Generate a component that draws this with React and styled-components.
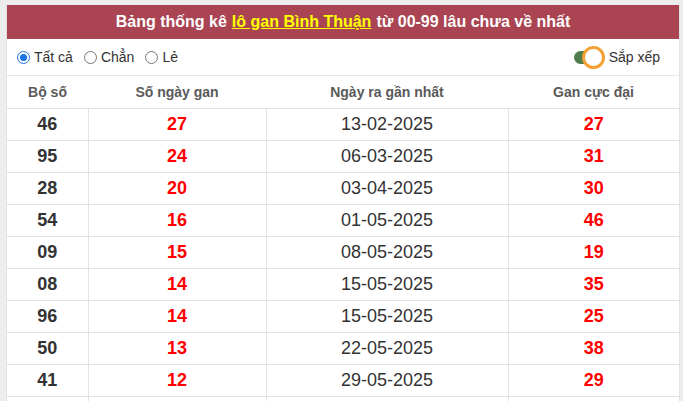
import React, { useState } from "react";
import styled, { createGlobalStyle } from "styled-components";

const GlobalStyle = createGlobalStyle`
  html, body {
    margin: 0;
    padding: 0;
    background: #ededed;
    overflow: hidden;
    font-family: "Liberation Sans", Arial, sans-serif;
  }
`;

const Page = styled.div`
  padding: 5px 3px 0 6px;
`;

const Card = styled.div`
  background: #fff;
  border-left: 1px solid #e2e2e2;
  border-right: 1px solid #e2e2e2;
`;

const Title = styled.div`
  height: 34px;
  background: #aa4453;
  color: #fff;
  font-weight: bold;
  font-size: 16px;
  display: flex;
  align-items: center;
  justify-content: center;
`;

const Highlight = styled.span`
  color: #ffff00;
  text-decoration: underline;
  margin: 0 5px;
`;

const FilterBar = styled.div`
  height: 36px;
  display: flex;
  align-items: center;
  justify-content: space-between;
  padding: 0 19px 0 9px;
  border-bottom: 1px solid #e6e6e6;
  font-size: 14px;
  color: #333;
`;

const Radios = styled.div`
  display: flex;
  align-items: center;
  gap: 10px;
`;

const RadioLabel = styled.label`
  display: flex;
  align-items: center;
  gap: 3px;
`;

const Radio = styled.span`
  width: 11px;
  height: 11px;
  border-radius: 50%;
  border: 1px solid ${(p) => (p.$on ? "#1a73e8" : "#767676")};
  display: flex;
  align-items: center;
  justify-content: center;
  margin: 0 1px;
  &::after {
    content: "";
    width: 7px;
    height: 7px;
    border-radius: 50%;
    background: ${(p) => (p.$on ? "#1a73e8" : "transparent")};
  }
`;

const Sort = styled.div`
  display: flex;
  align-items: center;
  gap: 6px;
`;

const Track = styled.span`
  position: relative;
  width: 29px;
  height: 13px;
  border-radius: 7px;
  background: #4e7d4e;
`;

const Knob = styled.span`
  position: absolute;
  right: -2px;
  top: -5px;
  width: 17px;
  height: 17px;
  border-radius: 50%;
  background: #fff;
  border: 3px solid #f3a035;
`;

const Table = styled.table`
  width: 100%;
  border-collapse: collapse;
  table-layout: fixed;
`;

const Th = styled.th`
  height: 32px;
  padding: 0;
  font-size: 14px;
  font-weight: bold;
  color: #5a5a5a;
  border-bottom: 1px solid #e3e3e3;
  width: ${(p) => p.$w}px;
`;

const Td = styled.td`
  height: 31px;
  padding: 0;
  text-align: center;
  font-size: 18px;
  font-weight: ${(p) => (p.$bold ? "bold" : "normal")};
  color: ${(p) => (p.$red ? "#ff0000" : "#333")};
  border: 1px solid #e3e3e3;
  &:first-child {
    border-left: none;
  }
  &:last-child {
    border-right: none;
  }
`;

const rows = [
  ["46", "27", "13-02-2025", "27"],
  ["95", "24", "06-03-2025", "31"],
  ["28", "20", "03-04-2025", "30"],
  ["54", "16", "01-05-2025", "46"],
  ["09", "15", "08-05-2025", "19"],
  ["08", "14", "15-05-2025", "35"],
  ["96", "14", "15-05-2025", "25"],
  ["50", "13", "22-05-2025", "38"],
  ["41", "12", "29-05-2025", "29"],
];

const App = () => {
  const [mode] = useState("all");
  return (
    <Page>
      <GlobalStyle />
      <Card>
        <Title>
          Bảng thống kê<Highlight>lô gan Bình Thuận</Highlight>từ 00-99 lâu chưa về nhất
        </Title>
        <FilterBar>
          <Radios>
            <RadioLabel>
              <Radio $on={mode === "all"} />
              Tất cả
            </RadioLabel>
            <RadioLabel>
              <Radio $on={mode === "even"} />
              Chẳn
            </RadioLabel>
            <RadioLabel>
              <Radio $on={mode === "odd"} />
              Lẻ
            </RadioLabel>
          </Radios>
          <Sort>
            <Track>
              <Knob />
            </Track>
            Sắp xếp
          </Sort>
        </FilterBar>
        <Table>
          <thead>
            <tr>
              <Th $w={81}>Bộ số</Th>
              <Th $w={178}>Số ngày gan</Th>
              <Th $w={242}>Ngày ra gần nhất</Th>
              <Th>Gan cực đại</Th>
            </tr>
          </thead>
          <tbody>
            {rows.map((r, i) => (
              <tr key={`row${i}`}>
                <Td $bold>{r[0]}</Td>
                <Td $bold $red>{r[1]}</Td>
                <Td>{r[2]}</Td>
                <Td $bold $red>{r[3]}</Td>
              </tr>
            ))}
            {/* next row is below the fold */}
            <tr>
              <Td />
              <Td />
              <Td />
              <Td />
            </tr>
          </tbody>
        </Table>
      </Card>
    </Page>
  );
};

export default App;
